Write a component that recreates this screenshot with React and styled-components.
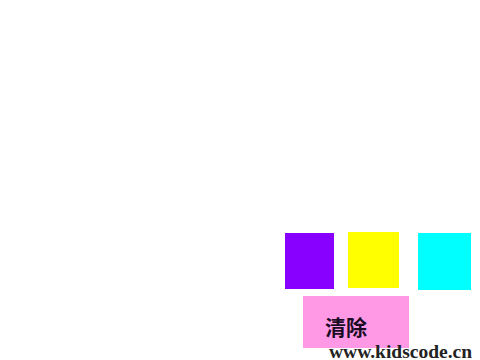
import React from "react";
import styled, { createGlobalStyle } from "styled-components";

const GlobalStyle = createGlobalStyle`
  html, body {
    margin: 0;
    padding: 0;
    background: #ffffff;
  }
`;

const swatches = [
  { color: "#8800ff", w: 49, h: 56, gap: 0, drop: 1 },
  { color: "#ffff00", w: 51, h: 56, gap: 14, drop: 0 },
  { color: "#00ffff", w: 53, h: 57, gap: 19, drop: 1 }
];

export default function App() {
  return (
    <Stage>
      <GlobalStyle />
      <SwatchRow>
        {swatches.map(s => (
          <Swatch
            key={s.color}
            $color={s.color}
            $w={s.w}
            $h={s.h}
            $gap={s.gap}
            $drop={s.drop}
          />
        ))}
      </SwatchRow>
      <ClearButton>清除</ClearButton>
      <Watermark>www.kidscode.cn</Watermark>
    </Stage>
  );
}

const Stage = styled.div`
  position: relative;
  width: 480px;
  height: 360px;
  padding-top: 232px;
  box-sizing: border-box;
  overflow: hidden;
  background: #ffffff;
`;

const SwatchRow = styled.div`
  display: flex;
  align-items: flex-start;
  height: 58px;
  margin-left: 285px;
`;

const Swatch = styled.div`
  width: ${p => p.$w}px;
  height: ${p => p.$h}px;
  margin-left: ${p => p.$gap}px;
  margin-top: ${p => p.$drop}px;
  background: ${p => p.$color};
  flex-shrink: 0;
`;

const ClearButton = styled.div`
  width: 106px;
  height: 52px;
  margin: 6px 0 0 303px;
  padding: 20px 0 0 22px;
  box-sizing: border-box;
  background: #ff99e6;
  color: #1a0c24;
  font-family: "Noto Sans CJK SC", sans-serif;
  font-size: 21px;
  font-weight: 700;
  line-height: 21px;
  cursor: pointer;
`;

const Watermark = styled.div`
  position: absolute;
  left: 329px;
  top: 343px;
  font-family: "Liberation Serif", serif;
  font-size: 19.5px;
  font-weight: 700;
  line-height: 17px;
  color: #222222;
  white-space: nowrap;
`;
